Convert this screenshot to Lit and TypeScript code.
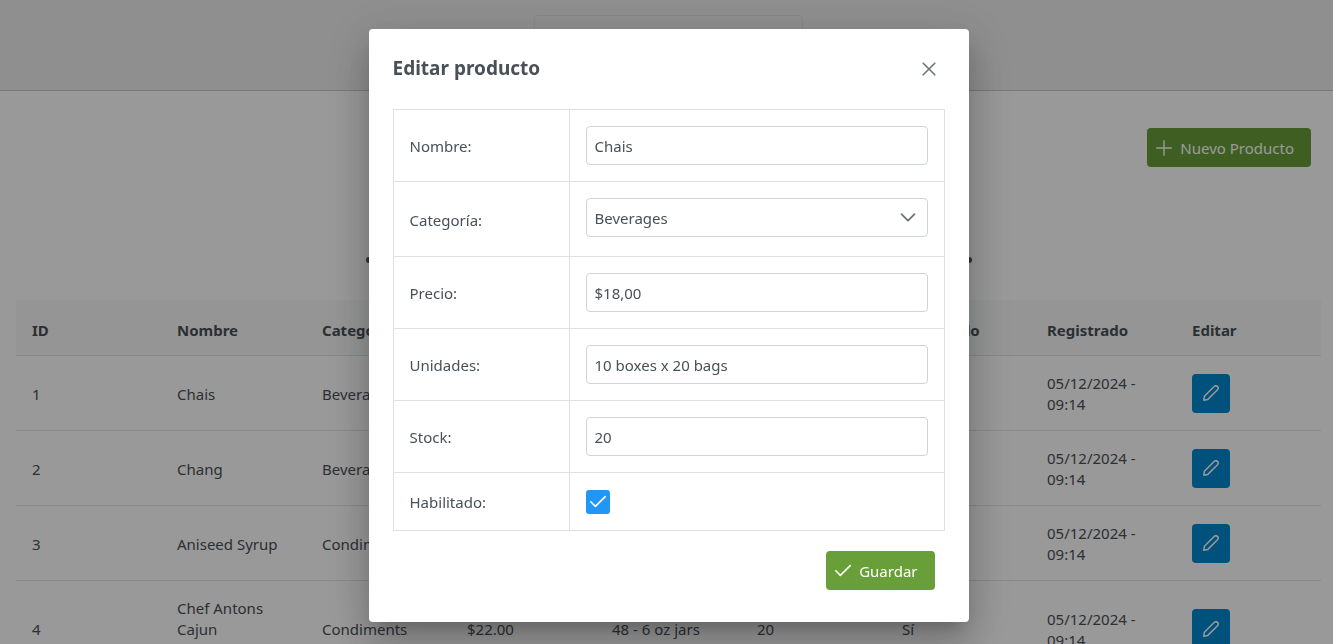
import { LitElement, html, css, svg } from "lit";
import { customElement, state } from "lit/decorators.js";

interface Product {
  id: number;
  name: string;
  category: string;
  price: string;
  units: string;
  stock: number;
  enabled: boolean;
  created: string;
}

const PRODUCTS: Product[] = [
  { id: 1, name: "Chais", category: "Beverages", price: "$18.00", units: "10 boxes x 20 bags", stock: 20, enabled: true, created: "05/12/2024 - 09:14" },
  { id: 2, name: "Chang", category: "Beverages", price: "$19.00", units: "24 - 12 oz bottles", stock: 20, enabled: true, created: "05/12/2024 - 09:14" },
  { id: 3, name: "Aniseed Syrup", category: "Condiments", price: "$10.00", units: "12 - 550 ml bottles", stock: 20, enabled: true, created: "05/12/2024 - 09:14" },
  { id: 4, name: "Chef Antons Cajun Seasoning", category: "Condiments", price: "$22.00", units: "48 - 6 oz jars", stock: 20, enabled: true, created: "05/12/2024 - 09:14" },
];

const COLUMNS = ["ID", "Nombre", "Categoría", "Precio", "Unidades", "Stock", "Habilitado", "Registrado", "Editar"];

const icon = (body: unknown, size = 16) => html`<svg
  class="icon" width=${size} height=${size} viewBox="0 0 16 16" fill="none" stroke="currentColor"
  stroke-linecap="round" stroke-linejoin="round" aria-hidden="true">${body}</svg>`;

const plus = svg`<path stroke-width="1.4" d="M8 .7v14.6M.7 8h14.6"/>`;
const check = svg`<path stroke-width="1.6" d="M.8 7.800 5.400 12.400 15.200 2.600"/>`;
const cross = svg`<path stroke-width="1.6" d="M2.200 2.200l11.600 11.600M13.800 2.200 2.200 13.800"/>`;
const pencil = svg`<path stroke-width="1.500" d="M.8 15.200l.6-4L11.100 1.500a2.100 2.100 0 0 1 3.400 3.200L4.800 14.400z"/>`;

@customElement("app-root")
export class AppRoot extends LitElement {
  @state() private open = true;

  static styles = css`
    :host {
      display: block;
      height: 100vh;
      overflow: hidden;
      background: #fff;
      color: #495057;
      font: 15px/21px "Noto Sans", "Open Sans", sans-serif;
    }
    * { box-sizing: border-box; }
    button, input, select { font: inherit; color: inherit; margin: 0; }
    .icon { display: block; flex: none; }

    .topbar {
      display: flex;
      justify-content: center;
      height: 91px;
      padding: 15px 12px 0 16px;
      background: #efefef;
      border-bottom: 1px solid #c8c8c8;
    }
    .brand {
      width: 269px;
      height: 60px;
      border: 1px solid #dee2e6;
      border-radius: 4px;
    }
    .page { padding: 37px 12px 0 16px; }
    .toolbar { display: flex; justify-content: flex-end; padding-right: 10px; }
    .btn {
      display: flex;
      align-items: center;
      gap: 8px;
      height: 39px;
      padding: 0 17px 0 9px;
      border: 0;
      border-radius: 4px;
      background: #689f38;
      color: #fff;
    }
    .btn span { padding-top: 2px; }
    .carousel {
      display: flex;
      justify-content: space-between;
      width: 606px;
      margin: 90px auto 37px;
    }
    .dot { width: 6px; height: 6px; border-radius: 50%; background: #495057; }
    .grid { width: 100%; border-collapse: separate; border-spacing: 0; table-layout: fixed; }
    .grid th, .grid td {
      padding: 17px 16px 15px;
      text-align: left;
      border-bottom: 1px solid #e4e5e7;
    }
    .grid th { height: 56px; padding: 20px 16px 14px; background: #f8f9fa; font-weight: 700; }
    .grid td { height: 75px; }
    .grid td.action { padding: 16px; }
    .edit {
      display: grid;
      place-items: center;
      width: 38px;
      height: 39px;
      padding: 0;
      border: 0;
      border-radius: 4px;
      background: #0288d1;
      color: #fff;
    }

    .mask {
      position: fixed;
      inset: 0;
      display: flex;
      justify-content: center;
      align-items: flex-start;
      padding: 29px 12px 0 16px;
      background: rgba(0, 0, 0, 0.4);
    }
    .dialog {
      width: 600px;
      padding: 24px 24px 32px;
      border-radius: 4px;
      background: #fff;
      box-shadow: 0 11px 15px -7px rgba(0, 0, 0, 0.2), 0 24px 38px 3px rgba(0, 0, 0, 0.14), 0 9px 46px 8px rgba(0, 0, 0, 0.12);
    }
    .head { display: flex; justify-content: space-between; align-items: center; height: 32px; margin-bottom: 24px; }
    .head h2 { margin: 0; padding-bottom: 2px; font-size: 19px; line-height: 26px; font-weight: 700; }
    .close {
      display: grid;
      place-items: center;
      width: 32px;
      height: 32px;
      padding: 0;
      border: 0;
      background: none;
      color: #6c757d;
    }
    .form { width: 100%; border-collapse: collapse; }
    .form th, .form td { padding: 16px; border: 1px solid #dee0e2; text-align: left; font-weight: 400; }
    .form th { width: 176px; padding: 17px 16px 15px; }
    .field {
      display: block;
      width: 100%;
      height: 39px;
      padding: 0 8px;
      border: 1px solid #ced4da;
      border-radius: 4px;
      background: #fff;
      outline: none;
    }
    .drop { display: grid; align-items: center; margin-bottom: 3px; }
    .drop > * { grid-area: 1 / 1; }
    .drop .field { appearance: none; padding-top: 1px; }
    .chevron { justify-self: end; margin-right: 12px; color: #6c757d; pointer-events: none; }
    .tick { display: grid; width: 24px; height: 24px; margin-top: 1px; place-items: center; color: #fff; }
    .tick > * { grid-area: 1 / 1; }
    .tick input { appearance: none; width: 24px; height: 24px; border-radius: 3px; border: 2px solid #ced4da; }
    .tick input:checked { background: #2196f3; border-color: #2196f3; }
    .tick .icon { pointer-events: none; z-index: 1; }
    .foot { display: flex; justify-content: flex-end; padding: 20px 10px 0; }
  `;

  private field(id: string, label: string, value: string) {
    return html`<tr>
      <th scope="row"><label for=${id}>${label}</label></th>
      <td><input class="field" id=${id} type="text" .value=${value} /></td>
    </tr>`;
  }

  private dialog() {
    const close = () => (this.open = false);
    return html`<div class="mask">
      <section class="dialog" role="dialog" aria-modal="true" aria-labelledby="title">
        <header class="head">
          <h2 id="title">Editar producto</h2>
          <button class="close" aria-label="Cerrar" @click=${close}>${icon(cross)}</button>
        </header>
        <table class="form">
          <tbody>
            ${this.field("name", "Nombre:", "Chais")}
            <tr>
              <th scope="row"><label for="category">Categoría:</label></th>
              <td>
                <div class="drop">
                  <select class="field" id="category"><option>Beverages</option><option>Condiments</option></select>
                  <svg class="icon chevron" width="16" height="16" viewBox="0 0 16 16" fill="none" stroke="currentColor"
                    stroke-width="1.8" stroke-linecap="round" stroke-linejoin="round" aria-hidden="true"><path d="M1.500 4.200 8 10.700l6.500-6.500"/></svg>
                </div>
              </td>
            </tr>
            ${this.field("price", "Precio:", "$18,00")}
            ${this.field("units", "Unidades:", "10 boxes x 20 bags")}
            ${this.field("stock", "Stock:", "20")}
            <tr>
              <th scope="row"><label for="enabled">Habilitado:</label></th>
              <td><div class="tick"><input id="enabled" type="checkbox" checked />${icon(check)}</div></td>
            </tr>
          </tbody>
        </table>
        <footer class="foot"><button class="btn" @click=${close}>${icon(check)}<span>Guardar</span></button></footer>
      </section>
    </div>`;
  }

  render() {
    return html`
      <header class="topbar"><div class="brand"></div></header>
      <main class="page">
        <div class="toolbar"><button class="btn">${icon(plus)}<span>Nuevo Producto</span></button></div>
        <div class="carousel"><span class="dot"></span><span class="dot"></span></div>
        <table class="grid">
          <thead><tr>${COLUMNS.map((c) => html`<th scope="col">${c}</th>`)}</tr></thead>
          <tbody>
            ${PRODUCTS.map((p) => html`<tr>
              <td>${p.id}</td>
              <td>${p.name}</td>
              <td>${p.category}</td>
              <td>${p.price}</td>
              <td>${p.units}</td>
              <td>${p.stock}</td>
              <td>${p.enabled ? "Sí" : "No"}</td>
              <td>${p.created}</td>
              <td class="action"><button class="edit" aria-label=${"Editar " + p.name} @click=${() => (this.open = true)}>${icon(pencil)}</button></td>
            </tr>`)}
          </tbody>
        </table>
      </main>
      ${this.open ? this.dialog() : ""}
    `;
  }
}
